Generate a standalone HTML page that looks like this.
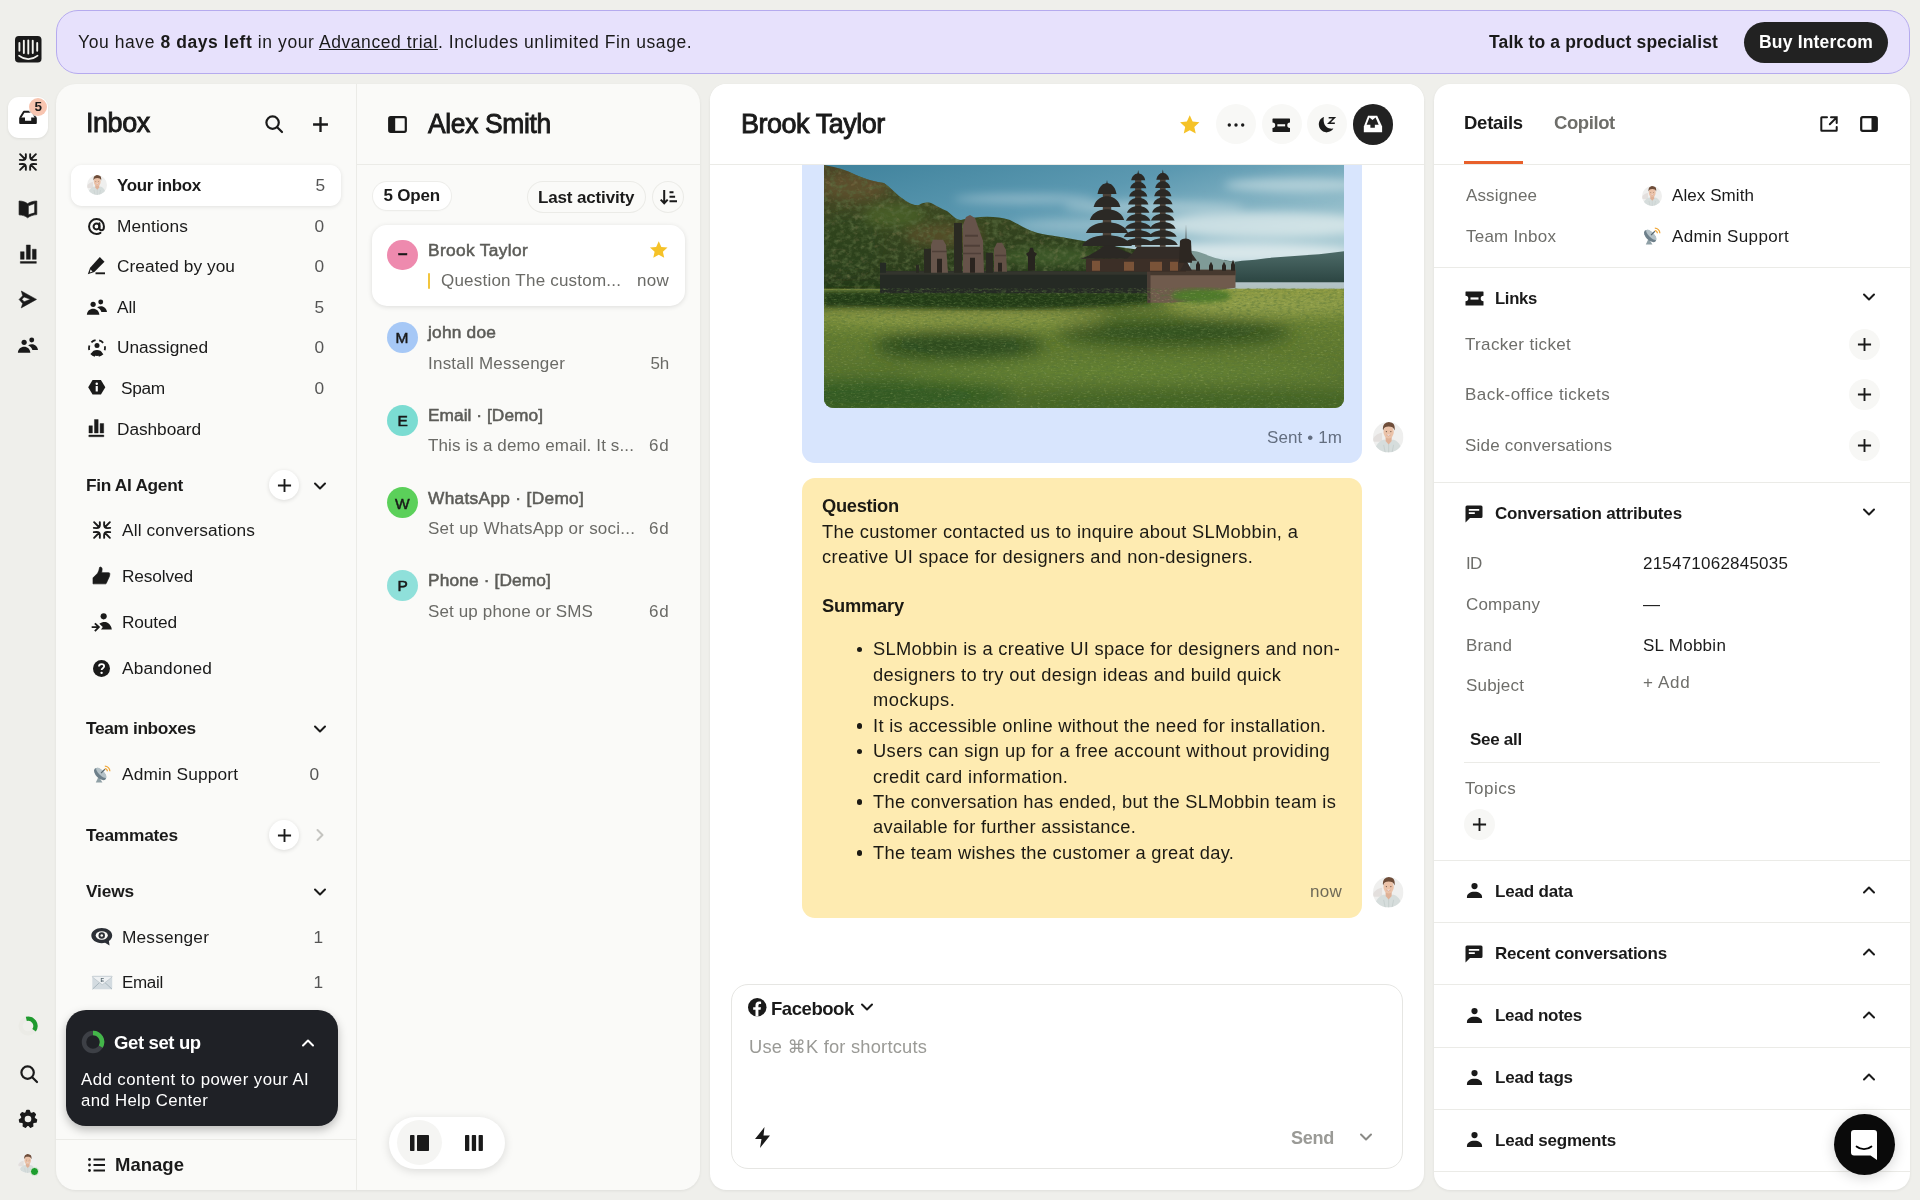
<!DOCTYPE html>
<html lang="en"><head><meta charset="utf-8"><title>Inbox – Brook Taylor</title>
<style>
*{box-sizing:border-box;margin:0;padding:0}
html,body{width:1920px;height:1200px;overflow:hidden}
body{background:#efefeb;font-family:"Liberation Sans",sans-serif;color:#1a1a1a;position:relative;-webkit-font-smoothing:antialiased}
.t{position:absolute;white-space:nowrap;display:block}
.i{position:absolute;display:block;overflow:visible}
.panel{position:absolute;top:84px;height:1106px;border-radius:22px;overflow:hidden}
.hr{position:absolute;height:1px;background:#e9e9e6}
#app{position:absolute;left:0;top:0;width:1920px;height:1200px;will-change:transform}

</style></head>
<body>
<div id="app">
<header class="grp"><div style="position:absolute;left:56px;top:10px;width:1854px;height:64px;border-radius:22px;background:#e7e1fc;border:1.800px solid #b5aaee"></div><span class="t" style="top:31.0px;font-size:17.5px;line-height:23px;left:78.0px;letter-spacing:0.579px;">You have <b>8 days left</b> in your <u>Advanced trial</u>. Includes unlimited Fin usage.</span><span class="t" style="top:31.0px;font-size:17.5px;line-height:23px;left:1489.0px;font-weight:700;letter-spacing:0.170px;">Talk to a product specialist</span><div style="position:absolute;left:1744px;top:21.5px;width:144px;height:41px;border-radius:20.500px;background:#222"></div><span class="t" style="top:31.0px;font-size:17.5px;line-height:23px;left:1759.0px;font-weight:700;color:#fff;letter-spacing:0.189px;">Buy Intercom</span></header><nav class="grp"><svg class="i" style="left:14.6px;top:36.1px" width="26.5" height="26.5" viewBox="0 0 26.500 26.500" ><rect width="26.500" height="26.500" rx="3.800" fill="#1a1a1a"/><path d="M4.4 6.9V14.8" stroke="#f4f4f0" stroke-width="1.900" stroke-linecap="round"/><path d="M8.85 4.7V17" stroke="#f4f4f0" stroke-width="1.900" stroke-linecap="round"/><path d="M13.3 4.4V17.5" stroke="#f4f4f0" stroke-width="1.900" stroke-linecap="round"/><path d="M17.75 4.7V17" stroke="#f4f4f0" stroke-width="1.900" stroke-linecap="round"/><path d="M22.2 6.9V14.8" stroke="#f4f4f0" stroke-width="1.900" stroke-linecap="round"/><path d="M4 19.700C9.500 24.200 17 24.200 22.600 19.700" fill="none" stroke="#f4f4f0" stroke-width="1.700" stroke-linecap="round"/></svg><div style="position:absolute;left:8px;top:96.5px;width:40px;height:41px;border-radius:11px;background:#fff;box-shadow:0 1px 3px rgba(0,0,0,.08)"></div><svg class="i" style="left:4.0px;top:92.0px" width="48.0" height="48.0" viewBox="0 0 1200 1200"><path d="M405 645L498 492H705L795 645" fill="none" stroke="#1a1a1a" stroke-width="48" stroke-linejoin="round"/><path d="M380 640H525V720H680V640H820V775a25 25 0 01-25 25H405a25 25 0 01-25-25z" fill="#1a1a1a"/></svg><div style="position:absolute;left:29.000000000000004px;top:97.6px;width:18.4px;height:18.4px;border-radius:50%;background:#f8c5b0;box-shadow:0 0 0 1px rgba(255,255,255,.7)"></div><span class="t" style="top:98.3px;font-size:13.5px;line-height:18px;left:34.6px;font-weight:700;letter-spacing:-0.116px;">5</span><svg class="i" style="left:17.8px;top:152.1px" width="20" height="20" viewBox="-1 -1 20 20" ><path d="M6.80 1.10L6.90 3.80Q6.90 7.10 3.60 7.10L0.80 6.90M1.10 1.20L5.40 5.50M6.80 16.90L6.90 14.20Q6.90 10.90 3.60 10.90L0.80 11.10M1.10 16.80L5.40 12.50M11.20 1.10L11.10 3.80Q11.10 7.10 14.40 7.10L17.20 6.90M16.90 1.20L12.60 5.50M11.20 16.90L11.10 14.20Q11.10 10.90 14.40 10.90L17.20 11.10M16.90 16.80L12.60 12.50" stroke="#1a1a1a" stroke-width="1.9" fill="none" stroke-linecap="round" stroke-linejoin="round"/></svg><svg class="i" style="left:12.3px;top:192.79999999999998px" width="32.0" height="32.0" viewBox="0 0 1200 1200"><path fill-rule="evenodd" d="M265 300C400 300 500 340 585 400 680 340 800 300 930 300V810C800 820 680 860 585 930 500 860 400 830 265 820zM612 482L850 392V745L612 815z" fill="#1a1a1a" stroke="#1a1a1a" stroke-width="24" stroke-linejoin="round"/></svg><svg class="i" style="left:11.589743589743588px;top:237.84615384615384px" width="32.820512820512825" height="32.820512820512825" viewBox="0 0 1200 1200"><path d="M310 500h135v280H310zM525 255h145v525H525zM745 410h140v370H745zM305 860h585v66H305z" fill="#1a1a1a" stroke="#1a1a1a" stroke-width="16" stroke-linejoin="round"/></svg><svg class="i" style="left:12.0px;top:283.1px" width="32.0" height="32.0" viewBox="0 0 1200 1200"><path fill-rule="evenodd" d="M350 300L920 615 345 935 400 770 265 615 400 480zM372 612L455 525 690 612 455 700z" fill="#1a1a1a" stroke="#1a1a1a" stroke-width="20" stroke-linejoin="round"/></svg><svg class="i" style="left:12.0px;top:329.0px" width="32.0" height="32.0" viewBox="0 0 1200 1200"><circle cx="455" cy="500" r="97" fill="#1a1a1a"/><circle cx="740" cy="410" r="92" fill="#1a1a1a"/><path d="M220 890C230 750 330 665 455 665 580 665 680 750 690 890zM605 610C650 582 700 570 745 570 870 570 960 660 975 790H765C740 710 690 650 605 610z" fill="#1a1a1a"/></svg><svg class="i" style="left:16.1px;top:1014.3px" width="24" height="24" viewBox="0 0 24 24" ><circle cx="12" cy="12" r="7.400" fill="none" stroke="#ebebe6" stroke-width="4.200"/><path d="M10.300 4.800a7.400 7.400 0 017.800 11.400" fill="none" stroke="#1f9a2e" stroke-width="4.300"/></svg><svg class="i" style="left:18.5px;top:1063.5px" width="20" height="20" viewBox="0 0 20 20" ><circle cx="8.600" cy="8.600" r="6.200" stroke="#1a1a1a" stroke-width="2.2" fill="none"/><path d="M13.200 13.200l4.800 4.800" stroke="#1a1a1a" stroke-width="2.2" stroke-linecap="round"/></svg><svg class="i" style="left:18.0px;top:1108.7px" width="20" height="20" viewBox="0 0 20 20" ><path d="M8.90 1.57L11.10 1.57L12.00 4.03L13.42 4.71L15.90 3.88L17.28 5.61L15.92 7.84L16.27 9.38L18.46 10.80L17.97 12.95L15.38 13.28L14.39 14.51L14.65 17.12L12.66 18.07L10.79 16.25L9.21 16.25L7.34 18.07L5.35 17.12L5.61 14.51L4.62 13.28L2.03 12.95L1.54 10.80L3.73 9.38L4.08 7.84L2.72 5.61L4.10 3.88L6.58 4.71L8.00 4.03z" fill="#1a1a1a" stroke="#1a1a1a" stroke-width="1.600" stroke-linejoin="round"/><circle cx="10" cy="10" r="3.300" fill="#efefeb"/></svg><svg class="i" style="left:17.5px;top:1153.5px" width="19" height="19" viewBox="0 0 40 40"><defs><clipPath id="av27_1163"><circle cx="20" cy="20" r="20"/></clipPath></defs><g clip-path="url(#av27_1163)"><rect width="40" height="40" fill="#efefee"/><path d="M0 22c3-5 8-8 12-8v12H0z" fill="#e3dfdd"/><path d="M2 40C3 29 9 24.500 15 23l5.500 5 5.500-5c6 1.500 11 6 12 17z" fill="#d6dddc"/><path d="M14 30l2 10M27 30l-2 10M20.500 29v11" stroke="#c3cccb" stroke-width="1"/><path d="M16.500 19h8v6l-4 4.500-4-4.500z" fill="#dfb197"/><ellipse cx="20.500" cy="13" rx="6.800" ry="8.500" fill="#ebc2a8"/><path d="M13.200 11C12 3.500 16.500 0 21 0c5 0 8.500 3.500 7.300 11C27 7 24.500 5.800 20.500 5.800S14.500 7 13.200 11z" fill="#6e4d39"/><ellipse cx="17.600" cy="12.600" rx=".900" ry=".700" fill="#4e3a30" opacity=".75"/><ellipse cx="23.400" cy="12.600" rx=".900" ry=".700" fill="#4e3a30" opacity=".75"/><path d="M17.500 16.800Q20.500 19.600 23.500 16.800" fill="#fff" stroke="#c58b7b" stroke-width=".700"/></g></svg><div style="position:absolute;left:30.3px;top:1167.3px;width:8.4px;height:8.4px;border-radius:50%;background:#1e9e2e;border:1.500px solid #efefeb"></div></nav><div class="panel" style="left:56px;width:644px;border-radius:20px;background:#fafaf8;box-shadow:0 1px 3px rgba(0,0,0,.07)"></div><div style="position:absolute;left:355.5px;top:84px;width:1px;height:1106px;background:#ebebe7"></div><aside class="grp"><span class="t" style="top:106.3px;font-size:27px;line-height:35px;left:86.0px;letter-spacing:-0.458px;-webkit-text-stroke:.900px #1a1a1a;">Inbox</span><svg class="i" style="left:264.0px;top:114.0px" width="20" height="20" viewBox="0 0 20 20" ><circle cx="8.600" cy="8.600" r="6.200" stroke="#1a1a1a" stroke-width="2.2" fill="none"/><path d="M13.200 13.200l4.800 4.800" stroke="#1a1a1a" stroke-width="2.2" stroke-linecap="round"/></svg><svg class="i" style="left:311.5px;top:115.5px" width="17" height="17" viewBox="0 0 16 16" ><path d="M8 1v14M1 8h14" stroke="#1a1a1a" stroke-width="2.2" fill="none"/></svg><div style="position:absolute;left:71px;top:165px;width:270px;height:40.5px;border-radius:11px;background:#fff;box-shadow:0 1px 4px rgba(0,0,0,.10)"></div><svg class="i" style="left:86.5px;top:175.2px" width="20" height="20" viewBox="0 0 40 40"><defs><clipPath id="av96_185"><circle cx="20" cy="20" r="20"/></clipPath></defs><g clip-path="url(#av96_185)"><rect width="40" height="40" fill="#efefee"/><path d="M0 22c3-5 8-8 12-8v12H0z" fill="#e3dfdd"/><path d="M2 40C3 29 9 24.500 15 23l5.500 5 5.500-5c6 1.500 11 6 12 17z" fill="#d6dddc"/><path d="M14 30l2 10M27 30l-2 10M20.500 29v11" stroke="#c3cccb" stroke-width="1"/><path d="M16.500 19h8v6l-4 4.500-4-4.500z" fill="#dfb197"/><ellipse cx="20.500" cy="13" rx="6.800" ry="8.500" fill="#ebc2a8"/><path d="M13.200 11C12 3.500 16.500 0 21 0c5 0 8.500 3.500 7.300 11C27 7 24.500 5.800 20.500 5.800S14.500 7 13.200 11z" fill="#6e4d39"/><ellipse cx="17.600" cy="12.600" rx=".900" ry=".700" fill="#4e3a30" opacity=".75"/><ellipse cx="23.400" cy="12.600" rx=".900" ry=".700" fill="#4e3a30" opacity=".75"/><path d="M17.500 16.800Q20.500 19.600 23.500 16.800" fill="#fff" stroke="#c58b7b" stroke-width=".700"/></g></svg><span class="t" style="top:173.8px;font-size:17.3px;line-height:22px;left:117.0px;font-weight:700;letter-spacing:-0.350px;transform:scaleX(0.9808);transform-origin:0 50%;">Your inbox</span><span class="t" style="top:173.8px;font-size:17.3px;line-height:22px;left:315.5px;color:#555;letter-spacing:-0.125px;">5</span><svg class="i" style="left:88.1px;top:217.5px" width="17" height="17" viewBox="0 0 18 18" ><circle cx="9" cy="9" r="3.100" fill="none" stroke="#1a1a1a" stroke-width="2.100"/><path d="M12.100 5.500v5c0 1.700 1 2.400 2.200 2.400 1.500 0 2.600-1.400 2.600-3.900A7.900 7.900 0 109 16.900c1.700 0 3-.400 4.200-1.200" fill="none" stroke="#1a1a1a" stroke-width="2.100" stroke-linecap="round"/></svg><span class="t" style="top:214.5px;font-size:17.3px;line-height:22px;left:117.0px;letter-spacing:0.117px;">Mentions</span><span class="t" style="top:214.5px;font-size:17.3px;line-height:22px;left:314.5px;color:#555;letter-spacing:0.875px;">0</span><svg class="i" style="left:87.1px;top:256.2px" width="19" height="19" viewBox="0 0 19 19" ><path d="M12.800 1l4.700 4.700L7.300 15.900.800 18.200l2.300-6.500z" fill="#1a1a1a"/><path d="M3.600 13.500l1.900 1.900-2.700 1z" fill="#fafaf8"/><path d="M8.500 17.300h9.500" stroke="#1a1a1a" stroke-width="1.900"/></svg><span class="t" style="top:255.1px;font-size:17.3px;line-height:22px;left:117.0px;letter-spacing:0.059px;">Created by you</span><span class="t" style="top:255.1px;font-size:17.3px;line-height:22px;left:314.5px;color:#555;letter-spacing:0.875px;">0</span><svg class="i" style="left:80.6px;top:291.0px" width="32.0" height="32.0" viewBox="0 0 1200 1200"><circle cx="455" cy="500" r="97" fill="#1a1a1a"/><circle cx="740" cy="410" r="92" fill="#1a1a1a"/><path d="M220 890C230 750 330 665 455 665 580 665 680 750 690 890zM605 610C650 582 700 570 745 570 870 570 960 660 975 790H765C740 710 690 650 605 610z" fill="#1a1a1a"/></svg><span class="t" style="top:295.8px;font-size:17.3px;line-height:22px;left:117.0px;letter-spacing:-0.087px;">All</span><span class="t" style="top:295.8px;font-size:17.3px;line-height:22px;left:314.5px;color:#555;letter-spacing:0.875px;">5</span><svg class="i" style="left:87.6px;top:338.6px" width="18" height="18" viewBox="0 0 18 18" ><circle cx="9" cy="9" r="8" fill="none" stroke="#1a1a1a" stroke-width="1.800" stroke-dasharray="4.700 3.700" stroke-dashoffset="2.300"/><circle cx="9" cy="6.600" r="2.500" fill="#1a1a1a"/><path d="M3.500 14.300c.7-2.300 3-3.400 5.500-3.400s4.800 1.100 5.500 3.400c-1.400 1.700-3.300 2.700-5.500 2.700s-4.100-1-5.500-2.700z" fill="#1a1a1a"/></svg><span class="t" style="top:336.4px;font-size:17.3px;line-height:22px;left:117.0px;letter-spacing:-0.030px;">Unassigned</span><span class="t" style="top:336.4px;font-size:17.3px;line-height:22px;left:314.5px;color:#555;letter-spacing:0.875px;">0</span><svg class="i" style="left:87.8px;top:380.1px" width="17.5" height="14.583333333333334" viewBox="0 0 18 15" ><path d="M4.700 0h8.600L17.800 7.500 13.300 15H4.700L.200 7.500z" fill="#1a1a1a"/><circle cx="9" cy="3.900" r="1.300" fill="#fff"/><rect x="7.900" y="6.200" width="2.200" height="5.600" fill="#fff"/></svg><span class="t" style="top:377.1px;font-size:17.3px;line-height:22px;left:121.0px;letter-spacing:-0.330px;">Spam</span><span class="t" style="top:377.1px;font-size:17.3px;line-height:22px;left:314.5px;color:#555;letter-spacing:0.875px;">0</span><svg class="i" style="left:81.21538461538461px;top:412.8557692307692px" width="30.76923076923077" height="30.76923076923077" viewBox="0 0 1200 1200"><path d="M310 500h135v280H310zM525 255h145v525H525zM745 410h140v370H745zM305 860h585v66H305z" fill="#1a1a1a" stroke="#1a1a1a" stroke-width="16" stroke-linejoin="round"/></svg><span class="t" style="top:417.8px;font-size:17.3px;line-height:22px;left:117.0px;letter-spacing:-0.064px;">Dashboard</span><span class="t" style="top:473.8px;font-size:17.3px;line-height:22px;left:86.0px;font-weight:700;letter-spacing:-0.303px;">Fin AI Agent</span><div style="position:absolute;left:269px;top:470px;width:30px;height:30px;border-radius:50%;background:#fff;box-shadow:0 1px 4px rgba(0,0,0,.13)"></div><svg class="i" style="left:276.5px;top:477.5px" width="15" height="15" viewBox="0 0 16 16" ><path d="M8 1v14M1 8h14" stroke="#1a1a1a" stroke-width="2" fill="none"/></svg><svg class="i" style="left:313.0px;top:478.5px" width="14" height="14" viewBox="0 0 14 14" ><path d="M2 4.500l5 5 5-5" stroke="#1a1a1a" stroke-width="2" fill="none" stroke-linecap="round" stroke-linejoin="round"/></svg><svg class="i" style="left:91.6px;top:520.2px" width="20" height="20" viewBox="-1 -1 20 20" ><path d="M6.80 1.10L6.90 3.80Q6.90 7.10 3.60 7.10L0.80 6.90M1.10 1.20L5.40 5.50M6.80 16.90L6.90 14.20Q6.90 10.90 3.60 10.90L0.80 11.10M1.10 16.80L5.40 12.50M11.20 1.10L11.10 3.80Q11.10 7.10 14.40 7.10L17.20 6.90M16.90 1.20L12.60 5.50M11.20 16.90L11.10 14.20Q11.10 10.90 14.40 10.90L17.20 11.10M16.90 16.80L12.60 12.50" stroke="#1a1a1a" stroke-width="1.9" fill="none" stroke-linecap="round" stroke-linejoin="round"/></svg><span class="t" style="top:519.3px;font-size:17.3px;line-height:22px;left:122.0px;letter-spacing:0.143px;">All conversations</span><svg class="i" style="left:86.19999999999999px;top:560.0999999999999px" width="32.0" height="80.0" viewBox="0 0 480 1200"><path d="M105 268L168 205C190 180 198 140 203 112 215 98 240 108 242 135L236 190H340C352 190 360 200 357 215L352 245 303 352C300 356 296 358 290 358H105z" fill="#1a1a1a" stroke="#1a1a1a" stroke-width="10" stroke-linejoin="round"/></svg><span class="t" style="top:565.0px;font-size:17.3px;line-height:22px;left:122.0px;letter-spacing:-0.140px;">Resolved</span><svg class="i" style="left:86.1px;top:560.0px" width="32.0" height="80.0" viewBox="0 0 480 1200"><circle cx="265" cy="845" r="46" fill="#1a1a1a"/><path d="M200 955C245 925 300 920 335 950 365 975 382 1005 387 1042H225L252 1004z" fill="#1a1a1a"/><path d="M85 1006H190M133 950L193 1006 133 1068" fill="none" stroke="#1a1a1a" stroke-width="28"/></svg><span class="t" style="top:610.8px;font-size:17.3px;line-height:22px;left:122.0px;letter-spacing:-0.134px;">Routed</span><svg class="i" style="left:93.1px;top:659.5px" width="17" height="17" viewBox="0 0 18 18" ><circle cx="9" cy="9" r="9" fill="#1a1a1a"/><path d="M6.300 7c0-1.600 1.200-2.700 2.800-2.700s2.700 1 2.700 2.400c0 2-2.700 2.100-2.700 4" fill="none" stroke="#fff" stroke-width="1.900"/><circle cx="9.100" cy="13.600" r="1.250" fill="#fff"/></svg><span class="t" style="top:656.5px;font-size:17.3px;line-height:22px;left:122.0px;letter-spacing:0.186px;">Abandoned</span><span class="t" style="top:717.3px;font-size:17.3px;line-height:22px;left:86.0px;font-weight:700;letter-spacing:-0.345px;">Team inboxes</span><svg class="i" style="left:313.0px;top:722.0px" width="14" height="14" viewBox="0 0 14 14" ><path d="M2 4.500l5 5 5-5" stroke="#1a1a1a" stroke-width="2" fill="none" stroke-linecap="round" stroke-linejoin="round"/></svg><svg class="i" style="left:92.3px;top:764.5px" width="19" height="19" viewBox="0 0 20 20" ><path d="M7 12l-3 6.500h7z" fill="#8fa0a6"/><ellipse cx="8.500" cy="9.500" rx="4.300" ry="8" transform="rotate(-45 8.500 9.500)" fill="#6d7f8a"/><ellipse cx="9.800" cy="8.200" rx="2.700" ry="7.300" transform="rotate(-45 9.800 8.200)" fill="#b4c1c7"/><path d="M9.500 8.500l4-4" stroke="#55656e" stroke-width="1.200"/><path d="M13.500 1.200a5.300 5.300 0 015.300 5.300M13.500 3.800a2.700 2.700 0 012.700 2.700" fill="none" stroke="#f0a637" stroke-width="1.300"/></svg><span class="t" style="top:763.3px;font-size:17.3px;line-height:22px;left:122.0px;letter-spacing:0.135px;">Admin Support</span><span class="t" style="top:763.3px;font-size:17.3px;line-height:22px;left:309.5px;color:#555;letter-spacing:0.375px;">0</span><span class="t" style="top:823.8px;font-size:17.3px;line-height:22px;left:86.0px;font-weight:700;letter-spacing:-0.215px;">Teammates</span><div style="position:absolute;left:269px;top:820px;width:30px;height:30px;border-radius:50%;background:#fff;box-shadow:0 1px 4px rgba(0,0,0,.13)"></div><svg class="i" style="left:276.5px;top:827.5px" width="15" height="15" viewBox="0 0 16 16" ><path d="M8 1v14M1 8h14" stroke="#1a1a1a" stroke-width="2" fill="none"/></svg><svg class="i" style="left:313.0px;top:828.0px" width="14" height="14" viewBox="0 0 14 14" ><path d="M4.500 2l5 5-5 5" stroke="#c4c4c0" stroke-width="2" fill="none" stroke-linecap="round" stroke-linejoin="round"/></svg><span class="t" style="top:879.8px;font-size:17.3px;line-height:22px;left:86.0px;font-weight:700;letter-spacing:-0.153px;">Views</span><svg class="i" style="left:313.0px;top:884.5px" width="14" height="14" viewBox="0 0 14 14" ><path d="M2 4.500l5 5 5-5" stroke="#1a1a1a" stroke-width="2" fill="none" stroke-linecap="round" stroke-linejoin="round"/></svg><svg class="i" style="left:90.8px;top:928.2px" width="21.5" height="17.59090909090909" viewBox="0 0 22 18" ><path d="M11 0C5 0 .300 3.400.300 7.700c0 2.300 1.300 4.300 3.400 5.700L3 17.800l4.600-2.700c1.100.300 2.200.400 3.400.400 6 0 10.700-3.400 10.700-7.800S17 0 11 0z" fill="#2b2f36" transform="translate(22 0) scale(-1 1)"/><ellipse cx="11" cy="7.700" rx="6.200" ry="4.300" fill="#fafaf8"/><circle cx="11" cy="7.700" r="3.300" fill="#2b2f36"/><circle cx="11" cy="7.700" r="1.300" fill="#fafaf8"/></svg><span class="t" style="top:925.8px;font-size:17.3px;line-height:22px;left:122.0px;letter-spacing:0.176px;">Messenger</span><span class="t" style="top:925.8px;font-size:17.3px;line-height:22px;left:313.5px;color:#555;letter-spacing:-0.900px;">1</span><svg class="i" style="left:91.5px;top:976.0px" width="20.5" height="13.666666666666666" viewBox="0 0 21 14" ><rect x=".300" y=".300" width="20.400" height="13.400" rx="1.500" fill="#d3dbe0"/><path d="M.500 13.500L8 6.500M20.500 13.500L13 6.500" stroke="#a9b6bd" stroke-width="1"/><path d="M.300 1L10.500 9 20.700 1V.8a.5.500 0 00-.5-.5H.8a.5.500 0 00-.5.500z" fill="#eef1f3" stroke="#b5c0c6" stroke-width=".700"/><text x="10.500" y="6" font-size="5.500" font-weight="700" text-anchor="middle" font-family="Liberation Sans, sans-serif" fill="#5a6a73">E</text></svg><span class="t" style="top:971.3px;font-size:17.3px;line-height:22px;left:122.0px;letter-spacing:-0.350px;transform:scaleX(0.9845);transform-origin:0 50%;">Email</span><span class="t" style="top:971.3px;font-size:17.3px;line-height:22px;left:313.5px;color:#555;letter-spacing:-0.900px;">1</span><div style="position:absolute;left:66px;top:1010px;width:272px;height:116px;border-radius:20px;background:#1f2126;box-shadow:0 4px 10px rgba(0,0,0,.25)"></div><svg class="i" style="left:81.0px;top:1030.0px" width="24" height="24" viewBox="0 0 24 24" ><circle cx="12" cy="12" r="9" fill="none" stroke="#3d4046" stroke-width="4.500"/><path d="M12 3a9 9 0 017.800 13.500" fill="none" stroke="#43b649" stroke-width="4.500"/></svg><span class="t" style="top:1030.8px;font-size:18.5px;line-height:24px;left:114.0px;font-weight:700;color:#fff;letter-spacing:-0.365px;">Get set up</span><svg class="i" style="left:301.0px;top:1036.0px" width="14" height="14" viewBox="0 0 14 14" ><path d="M2 9.500l5-5 5 5" stroke="#fff" stroke-width="2" fill="none" stroke-linecap="round" stroke-linejoin="round"/></svg><span class="t" style="top:1069.3px;font-size:16.8px;line-height:22px;left:81.0px;color:#fff;letter-spacing:0.455px;">Add content to power your AI</span><span class="t" style="top:1089.8px;font-size:16.8px;line-height:22px;left:81.0px;color:#fff;letter-spacing:0.330px;">and Help Center</span><div style="position:absolute;left:56px;top:1138.5px;width:299.5px;height:1px;background:#ebebe7"></div><svg class="i" style="left:87.5px;top:1158.0px" width="17" height="14" viewBox="0 0 17 14" ><path d="M5.500 1.500H17M5.500 7H17M5.500 12.500H17" stroke="#1a1a1a" stroke-width="2"/><circle cx="1.500" cy="1.500" r="1.400" fill="#1a1a1a"/><circle cx="1.500" cy="7" r="1.400" fill="#1a1a1a"/><circle cx="1.500" cy="12.500" r="1.400" fill="#1a1a1a"/></svg><span class="t" style="top:1152.8px;font-size:18.5px;line-height:24px;left:115.0px;font-weight:700;letter-spacing:0.020px;">Manage</span></aside><section class="grp"><svg class="i" style="left:388.0px;top:115.5px" width="19" height="17" viewBox="0 0 19 17" ><rect x="1.200" y="1.200" width="16.600" height="14.600" rx="1.500" fill="none" stroke="#1a1a1a" stroke-width="2.200"/><rect x="1.200" y="1.200" width="6" height="14.600" fill="#1a1a1a"/></svg><span class="t" style="top:107.0px;font-size:27px;line-height:35px;left:428.0px;letter-spacing:-0.350px;transform:scaleX(0.9784);transform-origin:0 50%;-webkit-text-stroke:.900px #1a1a1a;">Alex Smith</span><div style="position:absolute;left:356px;top:164px;width:344px;height:1px;background:#ebebe7"></div><div style="position:absolute;left:373px;top:181.5px;width:77.8px;height:28.5px;border-radius:15px;background:#fff;box-shadow:0 0 0 1px #ededea,0 1px 2px rgba(0,0,0,.05)"></div><span class="t" style="top:185.0px;font-size:17px;line-height:22px;left:383.5px;font-weight:700;letter-spacing:-0.205px;">5 Open</span><div style="position:absolute;left:528px;top:182px;width:116.8px;height:30px;border-radius:16px;background:#fafaf8;box-shadow:0 0 0 1px #ebebe7"></div><span class="t" style="top:186.5px;font-size:17px;line-height:22px;left:538.0px;font-weight:700;letter-spacing:-0.141px;">Last activity</span><div style="position:absolute;left:652.7px;top:181.7px;width:30.6px;height:30.6px;border-radius:50%;background:#fafaf8;box-shadow:0 0 0 1px #ebebe7"></div><svg class="i" style="left:660.0px;top:189.0px" width="17" height="16" viewBox="0 0 17 16" ><path d="M4.200 1v13M.700 10.600l3.500 3.600 3.500-3.600" fill="none" stroke="#1a1a1a" stroke-width="2"/><path d="M9.500 3.200h4M9.500 7.700h5.600M9.500 12.200h7.500" stroke="#1a1a1a" stroke-width="2"/></svg><div style="position:absolute;left:372px;top:224.5px;width:313px;height:81px;border-radius:15px;background:#fff;box-shadow:0 1px 5px rgba(0,0,0,.12)"></div><div style="position:absolute;left:387.0px;top:239.6px;width:30.8px;height:30.8px;border-radius:50%;background:#ee8aae"></div><span class="t" style="top:243.4px;font-size:17px;line-height:22px;left:397.9px;font-weight:700;letter-spacing:-0.469px;-webkit-text-stroke:.500px #1a1a1a;">–</span><span class="t" style="top:238.8px;font-size:17.3px;line-height:22px;left:428.0px;color:#5c5c58;letter-spacing:0.371px;-webkit-text-stroke:.550px #5c5c58;">Brook Taylor</span><svg class="i" style="left:648.8px;top:239.8px" width="19.5" height="19.5" viewBox="0 0 24 24" ><path d="M12 1.500l3.200 7 7.600.800-5.700 5.100 1.600 7.500L12 18.100l-6.700 3.800 1.600-7.500-5.700-5.100 7.600-.800z" fill="#f5c228"/></svg><div style="position:absolute;left:428px;top:273px;width:2px;height:15.5px;background:#f2c53d;border-radius:1px"></div><span class="t" style="top:270.1px;font-size:17px;line-height:22px;left:441.0px;color:#6a6a66;letter-spacing:0.212px;">Question The custom...</span><span class="t" style="top:270.1px;font-size:17px;line-height:22px;left:637.0px;color:#6a6a66;letter-spacing:0.325px;">now</span><div style="position:absolute;left:387.0px;top:322.20000000000005px;width:30.8px;height:30.8px;border-radius:50%;background:#a6c8f6"></div><span class="t" style="top:328.4px;font-size:15.5px;line-height:20px;left:395.6px;letter-spacing:0.578px;-webkit-text-stroke:.500px #1a1a1a;">M</span><span class="t" style="top:321.4px;font-size:17.3px;line-height:22px;left:428.0px;color:#5c5c58;letter-spacing:0.225px;-webkit-text-stroke:.550px #5c5c58;">john doe</span><span class="t" style="top:352.7px;font-size:17px;line-height:22px;left:428.0px;color:#6a6a66;letter-spacing:0.228px;">Install Messenger</span><span class="t" style="top:352.7px;font-size:17px;line-height:22px;left:650.5px;color:#6a6a66;letter-spacing:-0.281px;">5h</span><div style="position:absolute;left:387.0px;top:404.8px;width:30.8px;height:30.8px;border-radius:50%;background:#7bdcd2"></div><span class="t" style="top:411.0px;font-size:15.5px;line-height:20px;left:397.6px;letter-spacing:-0.844px;-webkit-text-stroke:.500px #1a1a1a;">E</span><span class="t" style="top:404.0px;font-size:17.3px;line-height:22px;left:428.0px;color:#5c5c58;letter-spacing:0.053px;-webkit-text-stroke:.550px #5c5c58;">Email · [Demo]</span><span class="t" style="top:435.3px;font-size:17px;line-height:22px;left:428.0px;color:#6a6a66;letter-spacing:0.134px;">This is a demo email. It s...</span><span class="t" style="top:435.3px;font-size:17px;line-height:22px;left:649.0px;color:#6a6a66;letter-spacing:0.719px;">6d</span><div style="position:absolute;left:387.0px;top:487.4px;width:30.8px;height:30.8px;border-radius:50%;background:#5bd05a"></div><span class="t" style="top:493.6px;font-size:15.5px;line-height:20px;left:394.9px;letter-spacing:0.359px;-webkit-text-stroke:.500px #1a1a1a;">W</span><span class="t" style="top:486.6px;font-size:17.3px;line-height:22px;left:428.0px;color:#5c5c58;letter-spacing:0.316px;-webkit-text-stroke:.550px #5c5c58;">WhatsApp · [Demo]</span><span class="t" style="top:517.9px;font-size:17px;line-height:22px;left:428.0px;color:#6a6a66;letter-spacing:0.225px;">Set up WhatsApp or soci...</span><span class="t" style="top:517.9px;font-size:17px;line-height:22px;left:649.0px;color:#6a6a66;letter-spacing:0.719px;">6d</span><div style="position:absolute;left:387.0px;top:570.0px;width:30.8px;height:30.8px;border-radius:50%;background:#8fe0da"></div><span class="t" style="top:576.2px;font-size:15.5px;line-height:20px;left:397.4px;letter-spacing:-0.344px;-webkit-text-stroke:.500px #1a1a1a;">P</span><span class="t" style="top:569.2px;font-size:17.3px;line-height:22px;left:428.0px;color:#5c5c58;letter-spacing:0.146px;-webkit-text-stroke:.550px #5c5c58;">Phone · [Demo]</span><span class="t" style="top:600.5px;font-size:17px;line-height:22px;left:428.0px;color:#6a6a66;letter-spacing:0.133px;">Set up phone or SMS</span><span class="t" style="top:600.5px;font-size:17px;line-height:22px;left:649.0px;color:#6a6a66;letter-spacing:0.719px;">6d</span><div style="position:absolute;left:389px;top:1117px;width:116px;height:52px;border-radius:26px;background:#fff;box-shadow:0 2px 10px rgba(0,0,0,.13)"></div><div style="position:absolute;left:396.5px;top:1120.0px;width:45.0px;height:45.0px;border-radius:50%;background:#f5f5f3"></div><svg class="i" style="left:409.5px;top:1134.5px" width="19" height="16" viewBox="0 0 19 16" ><rect x="0" y="0" width="4.500" height="16" rx=".800" fill="#1a1a1a"/><rect x="7" y="0" width="12" height="16" rx=".800" fill="#1a1a1a"/></svg><svg class="i" style="left:465.3px;top:1134.5px" width="18" height="16" viewBox="0 0 18 16" ><rect x="0" y="0" width="4.300" height="16" rx=".800" fill="#1a1a1a"/><rect x="6.800" y="0" width="4.300" height="16" rx=".800" fill="#1a1a1a"/><rect x="13.600" y="0" width="4.300" height="16" rx=".800" fill="#1a1a1a"/></svg></section><div class="panel" style="left:710px;width:713.500px;border-radius:16.500px;background:#fff;box-shadow:0 1px 3px rgba(0,0,0,.07)"></div><main class="grp"><div style="position:absolute;left:802px;top:164px;width:560px;height:298.6px;border-radius:0 0 13px 13px;background:#d8e5fd"></div><svg class="i" style="left:823.5px;top:164.5px;border-radius:0 0 9px 9px;overflow:hidden" width="520" height="243.5" viewBox="0 0 520 244" preserveAspectRatio="none"><defs>
<linearGradient id="sky" x1="0" y1="0" x2=".55" y2="1"><stop offset="0" stop-color="#3f829c"/><stop offset=".3" stop-color="#5c99b1"/><stop offset=".6" stop-color="#9ec4cf"/><stop offset="1" stop-color="#dde8e8"/></linearGradient>
<linearGradient id="hill" x1="0" y1="0" x2=".25" y2="1"><stop offset="0" stop-color="#4d4527"/><stop offset=".45" stop-color="#394821"/><stop offset="1" stop-color="#223518"/></linearGradient>
<linearGradient id="far" x1="0" y1="0" x2="0" y2="1"><stop offset="0" stop-color="#4d6b68"/><stop offset="1" stop-color="#2b4441"/></linearGradient>
<linearGradient id="grass" x1="0" y1="0" x2="0" y2="1"><stop offset="0" stop-color="#8f9b42"/><stop offset=".3" stop-color="#677f31"/><stop offset="1" stop-color="#506c2b"/></linearGradient>
<filter id="b2" x="-10%" y="-10%" width="120%" height="120%"><feGaussianBlur stdDeviation="2"/></filter>
<filter id="b5" x="-20%" y="-30%" width="140%" height="160%"><feGaussianBlur stdDeviation="5"/></filter>
<filter id="b9" x="-20%" y="-40%" width="140%" height="180%"><feGaussianBlur stdDeviation="8"/></filter>
<filter id="nz" x="0" y="0" width="100%" height="100%"><feTurbulence type="fractalNoise" baseFrequency=".22 .5" numOctaves="3" seed="4"/><feColorMatrix values="0 0 0 0 .08  0 0 0 0 .16  0 0 0 0 .04  0 0 0 -2.2 1.25"/></filter>
<filter id="nzl" x="0" y="0" width="100%" height="100%"><feTurbulence type="fractalNoise" baseFrequency=".3 .7" numOctaves="2" seed="9"/><feColorMatrix values="0 0 0 0 .72  0 0 0 0 .78  0 0 0 0 .32  0 0 0 2.2 -1.25"/></filter>
<filter id="nh" x="0" y="0" width="100%" height="100%"><feTurbulence type="fractalNoise" baseFrequency=".16 .2" numOctaves="3" seed="7"/><feColorMatrix values="0 0 0 0 .10  0 0 0 0 .15  0 0 0 0 .05  0 0 0 -2.4 1.35"/></filter>
<filter id="nhl" x="0" y="0" width="100%" height="100%"><feTurbulence type="fractalNoise" baseFrequency=".14 .18" numOctaves="3" seed="21"/><feColorMatrix values="0 0 0 0 .52  0 0 0 0 .36  0 0 0 0 .2  0 0 0 2.6 -1.55"/></filter>
<clipPath id="hc"><path d="M0 0C12 2 22 5 32 10 44 15 52 17 60 18 66 22 70 27 75 31 82 36 88 41 95 40 100 37 105 37 109 39 114 42 118 44 123 46 128 50 132 55 137 55 150 52 170 50 186 55 194 59 200 63 207 66 215 69 222 70 229 71 242 73 252 75 264 77 280 80 300 84 330 86V132H0z"/></clipPath>
</defs><rect width="520" height="244" fill="url(#sky)"/><g filter="url(#b5)" fill="#e6eff0"><ellipse cx="440" cy="60" rx="110" ry="13" opacity=".7"/><ellipse cx="330" cy="42" rx="90" ry="6" opacity=".4"/><ellipse cx="470" cy="20" rx="70" ry="7" opacity=".5"/><ellipse cx="200" cy="34" rx="70" ry="5" opacity=".35"/><ellipse cx="410" cy="88" rx="120" ry="10" opacity=".8"/><ellipse cx="250" cy="60" rx="60" ry="5" opacity=".3"/></g><path d="M400 95c4 1 8 2 11 2 5-1 9-1 14-1.500 10-1 19-2.500 28-3 14-1 28-2 42-3 9-1 17-2 25-3v32H400z" fill="url(#far)"/><path d="M366 86c5 0 9 1 14 3 5 2 10 4 15 5 6 2 11 3 16 3v22h-45z" fill="#7f9b97"/><rect x="405" y="117.500" width="115" height="12" fill="#b3c3c9"/><rect x="405" y="128.500" width="115" height="2.500" fill="#66745f"/><g clip-path="url(#hc)"><rect width="340" height="134" fill="url(#hill)"/><g filter="url(#b5)" opacity=".6"><ellipse cx="30" cy="22" rx="34" ry="14" fill="#6a5430"/><ellipse cx="22" cy="80" rx="34" ry="30" fill="#2a431c"/><ellipse cx="120" cy="70" rx="40" ry="12" fill="#66532f"/><ellipse cx="225" cy="92" rx="50" ry="10" fill="#4a6a33"/><ellipse cx="70" cy="50" rx="30" ry="12" fill="#4f6a2c"/></g><rect width="340" height="134" filter="url(#nh)" opacity=".8"/><rect width="340" height="134" filter="url(#nhl)" opacity=".32"/></g><rect x="0" y="124" width="520" height="120" fill="url(#grass)"/><g filter="url(#b9)"><ellipse cx="150" cy="136" rx="200" ry="9" fill="#1f3a18"/><ellipse cx="180" cy="138" rx="150" ry="6" fill="#1f3a18"/><ellipse cx="450" cy="140" rx="100" ry="8" fill="#9aa652" opacity=".9"/><ellipse cx="130" cy="153" rx="150" ry="7" fill="#9aa64d" opacity=".95"/><ellipse cx="135" cy="181" rx="85" ry="15" fill="#2b4a1d"/><ellipse cx="350" cy="168" rx="118" ry="14" fill="#31501e"/><ellipse cx="60" cy="232" rx="130" ry="16" fill="#335a22"/><ellipse cx="380" cy="238" rx="200" ry="10" fill="#3f6224"/><ellipse cx="300" cy="207" rx="220" ry="9" fill="#6c8c35" opacity=".6"/></g><path d="M0 127h326v11c-60 5-120 7-180 6-50 0-100-3-146-2z" fill="#213a19" filter="url(#b2)"/><path d="M56 106.500h268v22H56z" fill="#252a24"/><path d="M56 106.500h268v3.500H56z" fill="#33352d"/><path d="M56 98h6v10h-6z" fill="#252a24"/><path d="M323.500 105h88v18l-30 4-10 9-24 2h-24z" fill="#705b4d"/><path d="M323.500 105h88v5.500h-88z" fill="#46392f"/><path d="M323.500 105h3v33h-3z" fill="#4a3d35"/><g fill="#2a2621"><path d="M372 100l2-4 2 4v6h-4zM385 101l2-4 2 4v5h-4zM398 101l2-4 2 4v5h-4zM407 100l2-5 2 5v6h-4z"/></g><ellipse cx="377" cy="131" rx="30" ry="7" fill="#4f7a2a" filter="url(#b2)"/><g fill="#2a2a22"><path d="M130 58h8v50h-8zM100 84h8v24h-8zM162 88h7v20h-7zM92 100h3v8h-3z"/></g><path d="M139 108V60l3-8 4-2 5 3 3 9 5 14 1 32z" fill="#66534a"/><path d="M107 108V80l2-5h10l3 5 2 28z" fill="#67554b"/><path d="M170 107V84l3-6h5l4 7 1 22z" fill="#635146"/><path d="M141 70h13v2h-13zM140 80h16v2h-16zM139 88h18v1.500h-18zM108 86h15v1.500h-15zM171 90h11v1.500h-11z" fill="#4a3b33" opacity=".8"/><path d="M146 93h5v15h-5zM113 94h5v14h-5zM174 98h4v9h-4z" fill="#2a241f"/><path d="M204 106V92l-2-3 3-2 1-4 3 0 1 4 3 2-2 3v14z" fill="#27241f"/><path d="M282.2 19.0L283.0 15.0L283.8 19.0z" fill="#2b2925"/><rect x="278.8" y="19.0" width="8.4" height="65.0" fill="#4a4037"/><path d="M273.5 29.1C275.0 20.3 280.1 18.4 283.0 18.4S291.0 20.3 292.5 29.1z" fill="#2b2925"/><path d="M269.6 42.1C271.8 33.3 279.0 31.4 283.0 31.4S294.2 33.3 296.4 42.1z" fill="#2b2925"/><path d="M265.8 55.1C268.5 46.3 277.8 44.4 283.0 44.4S297.5 46.3 300.2 55.1z" fill="#2b2925"/><path d="M261.9 68.1C265.3 59.3 276.7 57.4 283.0 57.4S300.7 59.3 304.1 68.1z" fill="#2b2925"/><path d="M258.0 81.1C262.0 72.3 275.5 70.3 283.0 70.3S304.0 72.3 308.0 81.1z" fill="#2b2925"/><path d="M313.4 9.0L314.2 5.0L315.0 9.0z" fill="#2b2925"/><rect x="311.1" y="9.0" width="6.2" height="73.0" fill="#4a4037"/><path d="M307.2 15.3C308.3 9.8 312.1 8.6 314.2 8.6S320.1 9.8 321.2 15.3z" fill="#2b2925"/><path d="M306.1 23.4C307.4 17.9 311.8 16.7 314.2 16.7S321.0 17.9 322.3 23.4z" fill="#2b2925"/><path d="M305.1 31.5C306.5 26.0 311.5 24.8 314.2 24.8S321.9 26.0 323.3 31.5z" fill="#2b2925"/><path d="M304.0 39.7C305.6 34.1 311.1 32.9 314.2 32.9S322.8 34.1 324.4 39.7z" fill="#2b2925"/><path d="M302.9 47.8C304.8 42.3 310.8 41.0 314.2 41.0S323.6 42.3 325.4 47.8z" fill="#2b2925"/><path d="M301.9 55.9C303.9 50.4 310.5 49.1 314.2 49.1S324.5 50.4 326.5 55.9z" fill="#2b2925"/><path d="M300.8 64.0C303.0 58.5 310.2 57.3 314.2 57.3S325.4 58.5 327.6 64.0z" fill="#2b2925"/><path d="M299.8 72.1C302.1 66.6 309.9 65.4 314.2 65.4S326.3 66.6 328.6 72.1z" fill="#2b2925"/><path d="M298.7 80.2C301.2 74.7 309.6 73.5 314.2 73.5S327.2 74.7 329.7 80.2z" fill="#2b2925"/><path d="M338.0 8.5L338.8 4.5L339.6 8.5z" fill="#2b2925"/><rect x="335.9" y="8.5" width="5.7" height="73.5" fill="#4a4037"/><path d="M332.3 14.9C333.3 9.3 336.9 8.1 338.8 8.1S344.3 9.3 345.3 14.9z" fill="#2b2925"/><path d="M331.2 23.0C332.4 17.5 336.5 16.3 338.8 16.3S345.2 17.5 346.4 23.0z" fill="#2b2925"/><path d="M330.2 31.2C331.6 25.6 336.2 24.4 338.8 24.4S346.0 25.6 347.4 31.2z" fill="#2b2925"/><path d="M329.1 39.4C330.7 33.8 335.9 32.6 338.8 32.6S346.9 33.8 348.5 39.4z" fill="#2b2925"/><path d="M328.1 47.5C329.8 42.0 335.6 40.8 338.8 40.8S347.8 42.0 349.6 47.5z" fill="#2b2925"/><path d="M327.0 55.7C328.9 50.1 335.3 48.9 338.8 48.9S348.7 50.1 350.6 55.7z" fill="#2b2925"/><path d="M325.9 63.9C328.0 58.3 334.9 57.1 338.8 57.1S349.6 58.3 351.7 63.9z" fill="#2b2925"/><path d="M324.9 72.0C327.1 66.5 334.6 65.3 338.8 65.3S350.5 66.5 352.7 72.0z" fill="#2b2925"/><path d="M323.8 80.2C326.2 74.6 334.3 73.4 338.8 73.4S351.4 74.6 353.8 80.2z" fill="#2b2925"/><path d="M256 94c8-2 16-7 24-13h10c10 6 22 10 34 13z" fill="#2b2824"/><path d="M300 96c6-4 10-9 13-14h50l10 14z" fill="#332c27"/><path d="M262 94h100v13H262z" fill="#3c2f27"/><path d="M268 96h8v10h-8zM300 97h10v9h-10zM326 97h12v9h-12zM346 97h8v9h-8z" fill="#8a5c3d" opacity=".8"/><path d="M361 97l1-38 1 38 5 9h-12z" fill="#332b26"/><path d="M356 76c3-3 8-3 11 0l1 22h-13z" fill="#2d2722"/><rect x="0" y="124" width="520" height="120" filter="url(#nz)" opacity=".55"/><rect x="0" y="124" width="520" height="120" filter="url(#nzl)" opacity=".3"/></svg><span class="t" style="top:426.8px;font-size:17px;line-height:22px;left:1267.0px;color:#636e80;letter-spacing:0.118px;">Sent • 1m</span><svg class="i" style="left:1372.5px;top:422.0px" width="30.5" height="30.5" viewBox="0 0 40 40"><defs><clipPath id="av1387_437"><circle cx="20" cy="20" r="20"/></clipPath></defs><g clip-path="url(#av1387_437)"><rect width="40" height="40" fill="#efefee"/><path d="M0 22c3-5 8-8 12-8v12H0z" fill="#e3dfdd"/><path d="M2 40C3 29 9 24.500 15 23l5.500 5 5.500-5c6 1.500 11 6 12 17z" fill="#d6dddc"/><path d="M14 30l2 10M27 30l-2 10M20.500 29v11" stroke="#c3cccb" stroke-width="1"/><path d="M16.500 19h8v6l-4 4.500-4-4.500z" fill="#dfb197"/><ellipse cx="20.500" cy="13" rx="6.800" ry="8.500" fill="#ebc2a8"/><path d="M13.200 11C12 3.500 16.500 0 21 0c5 0 8.500 3.500 7.300 11C27 7 24.500 5.800 20.500 5.800S14.500 7 13.200 11z" fill="#6e4d39"/><ellipse cx="17.600" cy="12.600" rx=".900" ry=".700" fill="#4e3a30" opacity=".75"/><ellipse cx="23.400" cy="12.600" rx=".900" ry=".700" fill="#4e3a30" opacity=".75"/><path d="M17.500 16.800Q20.500 19.600 23.500 16.800" fill="#fff" stroke="#c58b7b" stroke-width=".700"/></g></svg><div style="position:absolute;left:710px;top:84px;width:713.5px;height:80px;background:#fff;border-radius:16.500px 16.500px 0 0"></div><div style="position:absolute;left:710px;top:164px;width:713.5px;height:1px;background:#ebebe7"></div><span class="t" style="top:107.0px;font-size:27px;line-height:35px;left:741.0px;letter-spacing:-0.485px;-webkit-text-stroke:.900px #1a1a1a;">Brook Taylor</span><svg class="i" style="left:1179.0px;top:113.8px" width="21.5" height="21.5" viewBox="0 0 24 24" ><path d="M12 1.500l3.200 7 7.600.800-5.700 5.100 1.600 7.500L12 18.100l-6.700 3.800 1.600-7.500-5.700-5.100 7.600-.800z" fill="#f5c228"/></svg><div style="position:absolute;left:1215.6px;top:104.3px;width:40px;height:40px;border-radius:50%;background:#f8f8f6"></div><div style="position:absolute;left:1261.5px;top:104.3px;width:40px;height:40px;border-radius:50%;background:#f8f8f6"></div><div style="position:absolute;left:1307.2px;top:104.3px;width:40px;height:40px;border-radius:50%;background:#f8f8f6"></div><svg class="i" style="left:1226.6px;top:121.5px" width="18" height="6" viewBox="0 0 18 6" ><circle cx="2.300" cy="3" r="1.700" fill="#1a1a1a"/><circle cx="9" cy="3" r="1.700" fill="#1a1a1a"/><circle cx="15.700" cy="3" r="1.700" fill="#1a1a1a"/></svg><svg class="i" style="left:1272.0px;top:117.5px" width="18.5" height="14.605263157894736" viewBox="0 0 19 15" ><path d="M1 .500h17a.5.500 0 01.500.500v3.700a2.800 2.800 0 000 5.600V14a.5.500 0 01-.500.500H1A.5.500 0 01.500 14v-3.700a2.800 2.800 0 000-5.600V1A.5.500 0 011 .500z" fill="#1a1a1a"/><rect x="5.500" y="6.400" width="8" height="2.200" fill="#f7f7f5"/></svg><svg class="i" style="left:1305.0px;top:104.0px" width="90.0" height="40.0" viewBox="0 0 1920 853"><path d="M405 275C330 300 290 370 295 445 300 540 380 610 470 605 530 600 580 570 605 525 500 540 420 480 405 400 395 350 395 310 405 275z" fill="#1a1a1a"/><path d="M505 294H626L509 411H636" fill="none" stroke="#1a1a1a" stroke-width="33" stroke-linejoin="miter"/></svg><div style="position:absolute;left:1352.5px;top:104.0px;width:40.6px;height:40.6px;border-radius:50%;background:#222"></div><svg class="i" style="left:1305.0px;top:103.8px" width="90.0" height="40.0" viewBox="0 0 1920 853"><path d="M1345 250H1540L1645 480V600H1255V480z" fill="#fff"/><path d="M1375 290L1440 340 1505 290 1572 445H1490V505H1395V445H1314z" fill="#222"/></svg><div style="position:absolute;left:802px;top:478.2px;width:560px;height:439.8px;border-radius:13px;background:#feebb1"></div><span class="t" style="top:494.0px;font-size:18.3px;line-height:24px;left:822.0px;font-weight:700;color:#1c1a14;letter-spacing:-0.298px;">Question</span><span class="t" style="top:519.5px;font-size:18.3px;line-height:24px;left:822.0px;color:#1c1a14;letter-spacing:0.311px;">The customer contacted us to inquire about SLMobbin, a</span><span class="t" style="top:545.0px;font-size:18.3px;line-height:24px;left:822.0px;color:#1c1a14;letter-spacing:0.352px;">creative UI space for designers and non-designers.</span><span class="t" style="top:594.0px;font-size:18.3px;line-height:24px;left:822.0px;font-weight:700;color:#1c1a14;letter-spacing:-0.204px;">Summary</span><span class="t" style="top:637.0px;font-size:18.3px;line-height:24px;left:873.0px;color:#1c1a14;letter-spacing:0.315px;">SLMobbin is a creative UI space for designers and non-</span><span class="t" style="top:662.5px;font-size:18.3px;line-height:24px;left:873.0px;color:#1c1a14;letter-spacing:0.366px;">designers to try out design ideas and build quick</span><span class="t" style="top:688.0px;font-size:18.3px;line-height:24px;left:873.0px;color:#1c1a14;letter-spacing:0.502px;">mockups.</span><span class="t" style="top:713.5px;font-size:18.3px;line-height:24px;left:873.0px;color:#1c1a14;letter-spacing:0.314px;">It is accessible online without the need for installation.</span><span class="t" style="top:739.0px;font-size:18.3px;line-height:24px;left:873.0px;color:#1c1a14;letter-spacing:0.393px;">Users can sign up for a free account without providing</span><span class="t" style="top:764.5px;font-size:18.3px;line-height:24px;left:873.0px;color:#1c1a14;letter-spacing:0.386px;">credit card information.</span><span class="t" style="top:789.5px;font-size:18.3px;line-height:24px;left:873.0px;color:#1c1a14;letter-spacing:0.288px;">The conversation has ended, but the SLMobbin team is</span><span class="t" style="top:815.0px;font-size:18.3px;line-height:24px;left:873.0px;color:#1c1a14;letter-spacing:0.307px;">available for further assistance.</span><span class="t" style="top:840.5px;font-size:18.3px;line-height:24px;left:873.0px;color:#1c1a14;letter-spacing:0.291px;">The team wishes the customer a great day.</span><div style="position:absolute;left:857.1999999999999px;top:646.9px;width:5.2px;height:5.2px;border-radius:50%;background:#1c1a14"></div><div style="position:absolute;left:857.1999999999999px;top:723.4px;width:5.2px;height:5.2px;border-radius:50%;background:#1c1a14"></div><div style="position:absolute;left:857.1999999999999px;top:748.9px;width:5.2px;height:5.2px;border-radius:50%;background:#1c1a14"></div><div style="position:absolute;left:857.1999999999999px;top:799.4px;width:5.2px;height:5.2px;border-radius:50%;background:#1c1a14"></div><div style="position:absolute;left:857.1999999999999px;top:850.4px;width:5.2px;height:5.2px;border-radius:50%;background:#1c1a14"></div><span class="t" style="top:881.3px;font-size:17px;line-height:22px;left:1310.0px;color:#6f6a58;letter-spacing:0.325px;">now</span><svg class="i" style="left:1372.5px;top:877.0px" width="30.5" height="30.5" viewBox="0 0 40 40"><defs><clipPath id="av1387_892"><circle cx="20" cy="20" r="20"/></clipPath></defs><g clip-path="url(#av1387_892)"><rect width="40" height="40" fill="#efefee"/><path d="M0 22c3-5 8-8 12-8v12H0z" fill="#e3dfdd"/><path d="M2 40C3 29 9 24.500 15 23l5.500 5 5.500-5c6 1.500 11 6 12 17z" fill="#d6dddc"/><path d="M14 30l2 10M27 30l-2 10M20.500 29v11" stroke="#c3cccb" stroke-width="1"/><path d="M16.500 19h8v6l-4 4.500-4-4.500z" fill="#dfb197"/><ellipse cx="20.500" cy="13" rx="6.800" ry="8.500" fill="#ebc2a8"/><path d="M13.200 11C12 3.500 16.500 0 21 0c5 0 8.500 3.500 7.300 11C27 7 24.500 5.800 20.500 5.800S14.500 7 13.200 11z" fill="#6e4d39"/><ellipse cx="17.600" cy="12.600" rx=".900" ry=".700" fill="#4e3a30" opacity=".75"/><ellipse cx="23.400" cy="12.600" rx=".900" ry=".700" fill="#4e3a30" opacity=".75"/><path d="M17.500 16.800Q20.500 19.600 23.500 16.800" fill="#fff" stroke="#c58b7b" stroke-width=".700"/></g></svg><div style="position:absolute;left:731px;top:984px;width:671.5px;height:185px;border-radius:17px;background:#fff;border:1px solid #e6e6e3"></div><svg class="i" style="left:747.8px;top:997.8px" width="18.5" height="18.5" viewBox="0 0 20 20" ><circle cx="10" cy="10" r="10" fill="#1a1a1a"/><path d="M13.600 12.800l.450-2.900h-2.800V8.100c0-.8.400-1.550 1.650-1.550h1.250V4.100s-1.150-.200-2.250-.200c-2.300 0-3.800 1.400-3.800 3.900v2.100H5.600v2.900h2.500V20h3.150v-7.200z" fill="#fff"/></svg><span class="t" style="top:996.5px;font-size:18.5px;line-height:24px;left:771.0px;font-weight:700;letter-spacing:-0.448px;">Facebook</span><svg class="i" style="left:860.0px;top:1000.0px" width="14" height="14" viewBox="0 0 14 14" ><path d="M2 4.500l5 5 5-5" stroke="#1a1a1a" stroke-width="2" fill="none" stroke-linecap="round" stroke-linejoin="round"/></svg><span class="t" style="top:1034.5px;font-size:18.3px;line-height:24px;left:749.0px;color:#9a9a96;letter-spacing:0.219px;font-family:'Liberation Sans','DejaVu Sans',sans-serif;">Use ⌘K for shortcuts</span><svg class="i" style="left:753.5px;top:1127.0px" width="17" height="21" viewBox="0 0 17 21" ><path d="M10.500 0L1 12h6.500L6 21l10-12.500H9.500z" fill="#1a1a1a"/></svg><span class="t" style="top:1126.0px;font-size:18.5px;line-height:24px;left:1291.0px;font-weight:700;color:#9a9a96;letter-spacing:-0.350px;transform:scaleX(0.9771);transform-origin:0 50%;">Send</span><svg class="i" style="left:1359.0px;top:1129.5px" width="14" height="14" viewBox="0 0 14 14" ><path d="M2 4.500l5 5 5-5" stroke="#8a8a86" stroke-width="2" fill="none" stroke-linecap="round" stroke-linejoin="round"/></svg></main><div class="panel" style="left:1434px;width:476px;border-radius:16.500px;background:#fff;box-shadow:0 1px 3px rgba(0,0,0,.07)"></div><aside class="grp"><span class="t" style="top:111.0px;font-size:18.5px;line-height:24px;left:1464.0px;font-weight:700;letter-spacing:-0.257px;">Details</span><span class="t" style="top:111.0px;font-size:18.5px;line-height:24px;left:1554.0px;font-weight:700;color:#6e6e6a;letter-spacing:-0.416px;">Copilot</span><div style="position:absolute;left:1464px;top:160.5px;width:59px;height:3.5px;background:#e8602b"></div><svg class="i" style="left:1819.5px;top:115.6px" width="18" height="16" viewBox="0 0 18 16" ><path d="M7 1.300H1.800a.5.500 0 00-.500.500v12.400a.5.500 0 00.500.500h14.400a.5.500 0 00.500-.500V11" fill="none" stroke="#1a1a1a" stroke-width="2" stroke-linecap="round"/><path d="M9.800 8.300l6.400-6.400M11 1.300h5.700V7" fill="none" stroke="#1a1a1a" stroke-width="2" stroke-linecap="round" stroke-linejoin="miter"/></svg><svg class="i" style="left:1860.0px;top:115.6px" width="18" height="16" viewBox="0 0 18 16" ><rect x="1.200" y="1.200" width="15.600" height="13.600" rx="1.500" fill="none" stroke="#1a1a1a" stroke-width="2.200"/><rect x="11.500" y="1.200" width="5.300" height="13.600" fill="#1a1a1a"/></svg><div style="position:absolute;left:1434px;top:164px;width:476px;height:1px;background:#ebebe7"></div><span class="t" style="top:185.0px;font-size:17px;line-height:22px;left:1466.0px;color:#6e6e6a;letter-spacing:0.142px;">Assignee</span><svg class="i" style="left:1641.5px;top:185.5px" width="20" height="20" viewBox="0 0 40 40"><defs><clipPath id="av1651_195"><circle cx="20" cy="20" r="20"/></clipPath></defs><g clip-path="url(#av1651_195)"><rect width="40" height="40" fill="#efefee"/><path d="M0 22c3-5 8-8 12-8v12H0z" fill="#e3dfdd"/><path d="M2 40C3 29 9 24.500 15 23l5.500 5 5.500-5c6 1.500 11 6 12 17z" fill="#d6dddc"/><path d="M14 30l2 10M27 30l-2 10M20.500 29v11" stroke="#c3cccb" stroke-width="1"/><path d="M16.500 19h8v6l-4 4.500-4-4.500z" fill="#dfb197"/><ellipse cx="20.500" cy="13" rx="6.800" ry="8.500" fill="#ebc2a8"/><path d="M13.200 11C12 3.500 16.500 0 21 0c5 0 8.500 3.500 7.300 11C27 7 24.500 5.800 20.500 5.800S14.500 7 13.200 11z" fill="#6e4d39"/><ellipse cx="17.600" cy="12.600" rx=".900" ry=".700" fill="#4e3a30" opacity=".75"/><ellipse cx="23.400" cy="12.600" rx=".900" ry=".700" fill="#4e3a30" opacity=".75"/><path d="M17.500 16.800Q20.500 19.600 23.500 16.800" fill="#fff" stroke="#c58b7b" stroke-width=".700"/></g></svg><span class="t" style="top:185.0px;font-size:17px;line-height:22px;left:1672.0px;letter-spacing:0.079px;">Alex Smith</span><span class="t" style="top:225.5px;font-size:17px;line-height:22px;left:1466.0px;color:#6e6e6a;letter-spacing:0.222px;">Team Inbox</span><svg class="i" style="left:1642.0px;top:226.5px" width="19" height="19" viewBox="0 0 20 20" ><path d="M7 12l-3 6.500h7z" fill="#8fa0a6"/><ellipse cx="8.500" cy="9.500" rx="4.300" ry="8" transform="rotate(-45 8.500 9.500)" fill="#6d7f8a"/><ellipse cx="9.800" cy="8.200" rx="2.700" ry="7.300" transform="rotate(-45 9.800 8.200)" fill="#b4c1c7"/><path d="M9.500 8.500l4-4" stroke="#55656e" stroke-width="1.200"/><path d="M13.500 1.200a5.300 5.300 0 015.300 5.300M13.500 3.800a2.700 2.700 0 012.700 2.700" fill="none" stroke="#f0a637" stroke-width="1.300"/></svg><span class="t" style="top:225.5px;font-size:17px;line-height:22px;left:1672.0px;letter-spacing:0.364px;">Admin Support</span><div style="position:absolute;left:1434px;top:267px;width:476px;height:1px;background:#ebebe7"></div><svg class="i" style="left:1464.5px;top:291.0px" width="19" height="15.0" viewBox="0 0 19 15" ><path d="M1 .500h17a.5.500 0 01.500.500v3.700a2.800 2.800 0 000 5.600V14a.5.500 0 01-.500.500H1A.5.500 0 01.500 14v-3.700a2.800 2.800 0 000-5.600V1A.5.500 0 011 .500z" fill="#1a1a1a"/><rect x="5.500" y="6.400" width="8" height="2.200" fill="#fff"/></svg><span class="t" style="top:288.0px;font-size:17px;line-height:22px;left:1495.0px;font-weight:700;letter-spacing:-0.350px;transform:scaleX(0.9806);transform-origin:0 50%;">Links</span><svg class="i" style="left:1862.0px;top:290.0px" width="14" height="14" viewBox="0 0 14 14" ><path d="M2 4.500l5 5 5-5" stroke="#1a1a1a" stroke-width="2" fill="none" stroke-linecap="round" stroke-linejoin="round"/></svg><span class="t" style="top:333.5px;font-size:17px;line-height:22px;left:1465.0px;color:#6e6e6a;letter-spacing:0.341px;">Tracker ticket</span><div style="position:absolute;left:1848.5px;top:328.5px;width:31.0px;height:31.0px;border-radius:50%;background:#f7f7f5"></div><svg class="i" style="left:1856.5px;top:336.5px" width="15" height="15" viewBox="0 0 16 16" ><path d="M8 1v14M1 8h14" stroke="#1a1a1a" stroke-width="2" fill="none"/></svg><span class="t" style="top:384.3px;font-size:17px;line-height:22px;left:1465.0px;color:#6e6e6a;letter-spacing:0.449px;">Back-office tickets</span><div style="position:absolute;left:1848.5px;top:379.3px;width:31.0px;height:31.0px;border-radius:50%;background:#f7f7f5"></div><svg class="i" style="left:1856.5px;top:387.3px" width="15" height="15" viewBox="0 0 16 16" ><path d="M8 1v14M1 8h14" stroke="#1a1a1a" stroke-width="2" fill="none"/></svg><span class="t" style="top:435.0px;font-size:17px;line-height:22px;left:1465.0px;color:#6e6e6a;letter-spacing:0.192px;">Side conversations</span><div style="position:absolute;left:1848.5px;top:430.0px;width:31.0px;height:31.0px;border-radius:50%;background:#f7f7f5"></div><svg class="i" style="left:1856.5px;top:438.0px" width="15" height="15" viewBox="0 0 16 16" ><path d="M8 1v14M1 8h14" stroke="#1a1a1a" stroke-width="2" fill="none"/></svg><div style="position:absolute;left:1434px;top:482px;width:476px;height:1px;background:#ebebe7"></div><svg class="i" style="left:1465.0px;top:504.5px" width="18" height="18" viewBox="0 0 18 18" ><path d="M.500 2A1.500 1.500 0 012 .500h14A1.500 1.500 0 0117.500 2v9.500A1.500 1.500 0 0116 13H5L.500 17.500z" fill="#1a1a1a"/><path d="M3.800 4.800h10.400M3.800 8.200h6" stroke="#fff" stroke-width="1.700"/></svg><span class="t" style="top:502.5px;font-size:17px;line-height:22px;left:1495.0px;font-weight:700;letter-spacing:-0.169px;">Conversation attributes</span><svg class="i" style="left:1862.0px;top:505.0px" width="14" height="14" viewBox="0 0 14 14" ><path d="M2 4.500l5 5 5-5" stroke="#1a1a1a" stroke-width="2" fill="none" stroke-linecap="round" stroke-linejoin="round"/></svg><span class="t" style="top:553.0px;font-size:17px;line-height:22px;left:1466.0px;color:#6e6e6a;letter-spacing:-0.667px;">ID</span><span class="t" style="top:553.0px;font-size:17px;line-height:22px;left:1643.0px;letter-spacing:0.219px;">215471062845035</span><span class="t" style="top:594.0px;font-size:17px;line-height:22px;left:1466.0px;color:#6e6e6a;letter-spacing:0.190px;">Company</span><span class="t" style="top:594.0px;font-size:17px;line-height:22px;left:1643.0px;">—</span><span class="t" style="top:634.5px;font-size:17px;line-height:22px;left:1466.0px;color:#6e6e6a;letter-spacing:0.139px;">Brand</span><span class="t" style="top:634.5px;font-size:17px;line-height:22px;left:1643.0px;letter-spacing:0.276px;">SL Mobbin</span><span class="t" style="top:675.0px;font-size:17px;line-height:22px;left:1466.0px;color:#6e6e6a;letter-spacing:0.200px;">Subject</span><span class="t" style="top:672.0px;font-size:17px;line-height:22px;left:1643.0px;color:#6e6e6a;letter-spacing:0.674px;">+ Add</span><span class="t" style="top:728.5px;font-size:17px;line-height:22px;left:1470.0px;font-weight:700;letter-spacing:-0.288px;">See all</span><div style="position:absolute;left:1464px;top:762px;width:416px;height:1px;background:#ebebe7"></div><span class="t" style="top:778.0px;font-size:17px;line-height:22px;left:1465.0px;color:#6e6e6a;letter-spacing:0.511px;">Topics</span><div style="position:absolute;left:1464.0px;top:808.5px;width:31.0px;height:31.0px;border-radius:50%;background:#f7f7f5"></div><svg class="i" style="left:1472.0px;top:816.5px" width="15" height="15" viewBox="0 0 16 16" ><path d="M8 1v14M1 8h14" stroke="#1a1a1a" stroke-width="2" fill="none"/></svg><div style="position:absolute;left:1434px;top:860.0px;width:476px;height:1px;background:#ebebe7"></div><svg class="i" style="left:1465.5px;top:882.2px" width="17" height="17" viewBox="0 0 18 18" ><circle cx="9" cy="4.300" r="3.300" fill="#1a1a1a"/><path d="M1 17v-1.200c0-3.500 3.500-5.600 8-5.600s8 2.100 8 5.600V17z" fill="#1a1a1a"/></svg><span class="t" style="top:880.7px;font-size:17px;line-height:22px;left:1495.0px;font-weight:700;letter-spacing:-0.160px;">Lead data</span><svg class="i" style="left:1862.0px;top:883.2px" width="14" height="14" viewBox="0 0 14 14" ><path d="M2 9.500l5-5 5 5" stroke="#1a1a1a" stroke-width="2" fill="none" stroke-linecap="round" stroke-linejoin="round"/></svg><div style="position:absolute;left:1434px;top:922.2px;width:476px;height:1px;background:#ebebe7"></div><svg class="i" style="left:1465.0px;top:944.9px" width="18" height="18" viewBox="0 0 18 18" ><path d="M.500 2A1.500 1.500 0 012 .500h14A1.500 1.500 0 0117.500 2v9.500A1.500 1.500 0 0116 13H5L.500 17.500z" fill="#1a1a1a"/><path d="M3.800 4.800h10.400M3.800 8.200h6" stroke="#fff" stroke-width="1.700"/></svg><span class="t" style="top:942.9px;font-size:17px;line-height:22px;left:1495.0px;font-weight:700;letter-spacing:-0.240px;">Recent conversations</span><svg class="i" style="left:1862.0px;top:945.4px" width="14" height="14" viewBox="0 0 14 14" ><path d="M2 9.500l5-5 5 5" stroke="#1a1a1a" stroke-width="2" fill="none" stroke-linecap="round" stroke-linejoin="round"/></svg><div style="position:absolute;left:1434px;top:984.4px;width:476px;height:1px;background:#ebebe7"></div><svg class="i" style="left:1465.5px;top:1006.6px" width="17" height="17" viewBox="0 0 18 18" ><circle cx="9" cy="4.300" r="3.300" fill="#1a1a1a"/><path d="M1 17v-1.200c0-3.500 3.500-5.600 8-5.600s8 2.100 8 5.600V17z" fill="#1a1a1a"/></svg><span class="t" style="top:1005.1px;font-size:17px;line-height:22px;left:1495.0px;font-weight:700;letter-spacing:-0.289px;">Lead notes</span><svg class="i" style="left:1862.0px;top:1007.6px" width="14" height="14" viewBox="0 0 14 14" ><path d="M2 9.500l5-5 5 5" stroke="#1a1a1a" stroke-width="2" fill="none" stroke-linecap="round" stroke-linejoin="round"/></svg><div style="position:absolute;left:1434px;top:1046.6px;width:476px;height:1px;background:#ebebe7"></div><svg class="i" style="left:1465.5px;top:1068.8px" width="17" height="17" viewBox="0 0 18 18" ><circle cx="9" cy="4.300" r="3.300" fill="#1a1a1a"/><path d="M1 17v-1.200c0-3.500 3.500-5.600 8-5.600s8 2.100 8 5.600V17z" fill="#1a1a1a"/></svg><span class="t" style="top:1067.3px;font-size:17px;line-height:22px;left:1495.0px;font-weight:700;letter-spacing:-0.160px;">Lead tags</span><svg class="i" style="left:1862.0px;top:1069.8px" width="14" height="14" viewBox="0 0 14 14" ><path d="M2 9.500l5-5 5 5" stroke="#1a1a1a" stroke-width="2" fill="none" stroke-linecap="round" stroke-linejoin="round"/></svg><div style="position:absolute;left:1434px;top:1108.8px;width:476px;height:1px;background:#ebebe7"></div><svg class="i" style="left:1465.5px;top:1131.0px" width="17" height="17" viewBox="0 0 18 18" ><circle cx="9" cy="4.300" r="3.300" fill="#1a1a1a"/><path d="M1 17v-1.200c0-3.500 3.500-5.600 8-5.600s8 2.100 8 5.600V17z" fill="#1a1a1a"/></svg><span class="t" style="top:1129.5px;font-size:17px;line-height:22px;left:1495.0px;font-weight:700;letter-spacing:-0.221px;">Lead segments</span><div style="position:absolute;left:1434px;top:1170.8px;width:476px;height:1px;background:#ebebe7"></div></aside><div style="position:absolute;left:1833.7px;top:1113.5px;width:61.0px;height:61.0px;border-radius:50%;background:#0a0a0a;box-shadow:0 2px 14px rgba(0,0,0,.18)"></div><svg class="i" style="left:1850.5px;top:1129.5px" width="28" height="30" viewBox="0 0 28 30" ><path d="M3 0h20a3 3 0 013 3v27l-6.500-4.500H3a3 3 0 01-3-3V3a3 3 0 013-3z" fill="#fff"/><path d="M5.500 16.500c2.200 1.900 4.800 2.700 7.500 2.700s5.300-.800 7.500-2.700" fill="none" stroke="#000" stroke-width="1.700" stroke-linecap="round"/></svg>
</div>
</body></html>
